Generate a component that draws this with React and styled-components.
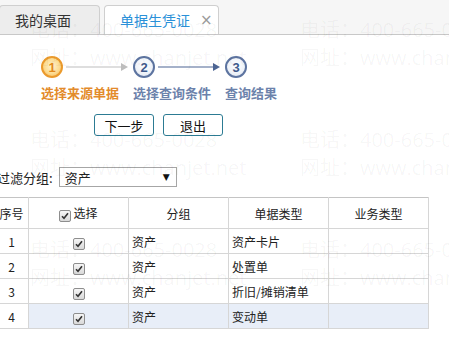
import React from "react";
import styled, {createGlobalStyle} from "styled-components";

const GlobalStyle = createGlobalStyle`
  html, body {
    margin: 0;
    padding: 0;
    background: #fff;
  }
  body {
    font-family: "Liberation Sans", "Noto Sans CJK SC", sans-serif;
    color: #222;
    overflow: hidden;
  }
`;

const Page = styled.div`
  position: relative;
  width: 449px;
  height: 351px;
  overflow: hidden;
`;

const TabBar = styled.div`
  display: flex;
  align-items: flex-end;
  gap: 4px;
  height: 34px;
  background: #f6f6f6;
  border-bottom: 1px solid #c8c8c8;
`;

const Tab = styled.div`
  display: flex;
  align-items: center;
  box-sizing: border-box;
  height: 29px;
  width: ${p => p.$width}px;
  margin-left: ${p => p.$first ? "-1px" : "0"};
  padding-left: 15px;
  border: 1px solid #cfcfcf;
  border-bottom: none;
  border-radius: 4px 4px 0 0;
  background: ${p => p.$active ? "#fff" : "#ededed"};
  color: ${p => p.$active ? "#2a90d8" : "#333"};
  font-size: 14px;
  font-family: "Noto Sans CJK SC", sans-serif;
`;

const Close = styled.span`
  margin-left: 10px;
  color: #9a9a9a;
  font-size: 15px;
  font-family: "DejaVu Sans", sans-serif;
`;

const Wizard = styled.div`
  padding: 21px 0 0 41px;
`;

const StepsRow = styled.div`
  display: flex;
  align-items: center;
  height: 22px;
`;

const Circle = styled.div`
  box-sizing: border-box;
  width: 22px;
  height: 22px;
  border-radius: 50%;
  display: flex;
  align-items: center;
  justify-content: center;
  font-family: "Liberation Sans", sans-serif;
  font-weight: bold;
  font-size: 13px;
  border: 2px solid ${p => p.$current ? "#eb9a2c" : "#5d74a0"};
  background: ${p => p.$current
    ? "radial-gradient(circle at 50% 45%, #fff3cf 0%, #fcdc92 55%, #f4b24a 100%)"
    : "radial-gradient(circle at 50% 40%, #ffffff 0%, #eef2f8 60%, #d5deec 100%)"};
  color: ${p => p.$current ? "#e2891d" : "#3f5a8c"};
`;

const ArrowBox = styled.div`
  width: 62px;
  height: 10px;
  margin: 0 5px 0 3px;
  display: flex;
`;

const Arrow = ({color}) => (
  <ArrowBox>
    <svg width="62" height="10" viewBox="0 0 62 10">
      <line x1="0" y1="5" x2="57" y2="5" stroke={color} strokeWidth="1.2"/>
      <polygon points="55,1 62,5 55,9" fill={color}/>
    </svg>
  </ArrowBox>
);

const LabelsRow = styled.div`
  display: flex;
  margin-top: 7px;
`;

const StepLabel = styled.div`
  width: 92px;
  font-size: 13px;
  line-height: 16px;
  font-weight: bold;
  font-family: "Noto Sans CJK SC", sans-serif;
  color: ${p => p.$current ? "#e38b2b" : "#6c82ab"};
  white-space: nowrap;
`;

const ButtonsRow = styled.div`
  display: flex;
  gap: 9px;
  margin: 13px 0 0 53px;
`;

const Button = styled.button`
  box-sizing: border-box;
  width: 60px;
  height: 22px;
  padding: 0;
  border: 1px solid #2c7b93;
  border-radius: 3px;
  background: #fff;
  color: #111;
  font-size: 13px;
  font-family: "Noto Sans CJK SC", sans-serif;
  cursor: pointer;
`;

const FilterRow = styled.div`
  display: flex;
  align-items: center;
  gap: 6px;
  margin: 31px 0 0 -3px;
`;

const FilterLabel = styled.span`
  font-size: 13px;
  font-family: "Noto Sans CJK SC", sans-serif;
  color: #222;
`;

const Select = styled.div`
  box-sizing: border-box;
  display: flex;
  align-items: center;
  justify-content: space-between;
  width: 118px;
  height: 20px;
  padding: 0 6px 0 5px;
  border: 1px solid #a6a6a6;
  background: #fff;
  font-size: 13px;
  font-family: "Noto Sans CJK SC", sans-serif;
`;

const Caret = styled.span`
  font-size: 9px;
  color: #111;
  font-family: "DejaVu Sans", sans-serif;
`;

const Table = styled.table`
  margin: 10px 0 0 -6px;
  border-collapse: collapse;
  table-layout: fixed;
  font-size: 12px;
  font-family: "Noto Sans CJK SC", sans-serif;
  color: #222;
`;

const Th = styled.th`
  height: 30px;
  padding: 0;
  font-weight: normal;
  text-align: center;
  border: 1px solid #d6d6d6;
  border-top-color: #c4c4c4;
  background: #fff;
`;

const Td = styled.td`
  height: 24px;
  padding: 0 0 0 ${p => p.$align === "left" ? "3px" : "0"};
  text-align: ${p => p.$align || "center"};
  border: 1px solid #d6d6d6;
  background: ${p => p.$hl ? "#e8eef8" : "#fff"};
`;

const CheckBox = styled.span`
  box-sizing: border-box;
  display: inline-flex;
  align-items: center;
  justify-content: center;
  width: 12px;
  height: 12px;
  vertical-align: -2px;
  margin-right: ${p => p.$gap ? "2px" : "0"};
  border: 1px solid #8e8e8e;
  border-radius: 2px;
  background: linear-gradient(#f6f6f6, #d9d9d9);
`;

const Check = ({gap}) => (
  <CheckBox $gap={gap}>
    <svg width="8" height="8" viewBox="0 0 8 8">
      <path d="M1 4.2 L3 6.3 L7 1.2" fill="none" stroke="#333" strokeWidth="1.6"/>
    </svg>
  </CheckBox>
);

const Watermark = styled.div`
  position: absolute;
  inset: 0;
  pointer-events: none;
  display: grid;
  grid-template-columns: 270px 270px;
  grid-auto-rows: 110px;
  padding: 16px 0 0 30px;
  color: rgba(0, 0, 0, 0.045);
  font-size: 20px;
  line-height: 28px;
  font-family: "Open Sans", "Noto Sans CJK SC", sans-serif;
  white-space: nowrap;
`;

const rows = [
  {no: 1, group: "资产", type: "资产卡片"},
  {no: 2, group: "资产", type: "处置单"},
  {no: 3, group: "资产", type: "折旧/摊销清单"},
  {no: 4, group: "资产", type: "变动单", hl: true},
];

export default function App() {
  return (
    <Page>
      <GlobalStyle/>
      <TabBar>
        <Tab $first $width={101}>我的桌面</Tab>
        <Tab $active $width={115}>单据生凭证<Close>×</Close></Tab>
      </TabBar>

      <Wizard>
        <StepsRow>
          <Circle $current>1</Circle>
          <Arrow color="#bdbdbd"/>
          <Circle>2</Circle>
          <Arrow color="#4d6593"/>
          <Circle>3</Circle>
        </StepsRow>
        <LabelsRow>
          <StepLabel $current>选择来源单据</StepLabel>
          <StepLabel>选择查询条件</StepLabel>
          <StepLabel>查询结果</StepLabel>
        </LabelsRow>
        <ButtonsRow>
          <Button>下一步</Button>
          <Button>退出</Button>
        </ButtonsRow>
      </Wizard>

      <FilterRow>
        <FilterLabel>过滤分组:</FilterLabel>
        <Select>
          <span>资产</span>
          <Caret>▼</Caret>
        </Select>
      </FilterRow>

      <Table>
        <colgroup>
          <col style={{width: 34}}/>
          <col style={{width: 100}}/>
          <col style={{width: 100}}/>
          <col style={{width: 100}}/>
          <col style={{width: 100}}/>
        </colgroup>
        <thead>
          <tr>
            <Th>序号</Th>
            <Th><Check gap/>选择</Th>
            <Th>分组</Th>
            <Th>单据类型</Th>
            <Th>业务类型</Th>
          </tr>
        </thead>
        <tbody>
          {rows.map(r => (
            <tr key={r.no}>
              <Td>{r.no}</Td>
              <Td $hl={r.hl}><Check/></Td>
              <Td $hl={r.hl} $align="left">{r.group}</Td>
              <Td $hl={r.hl} $align="left">{r.type}</Td>
              <Td $hl={r.hl}></Td>
            </tr>
          ))}
        </tbody>
      </Table>

      <Watermark>
        {[0, 1, 2, 3, 4, 5].map(i => (
          <div key={i}>
            <div>电话：400-665-0028</div>
            <div>网址：www.chanjet.net</div>
          </div>
        ))}
      </Watermark>
    </Page>
  );
}
